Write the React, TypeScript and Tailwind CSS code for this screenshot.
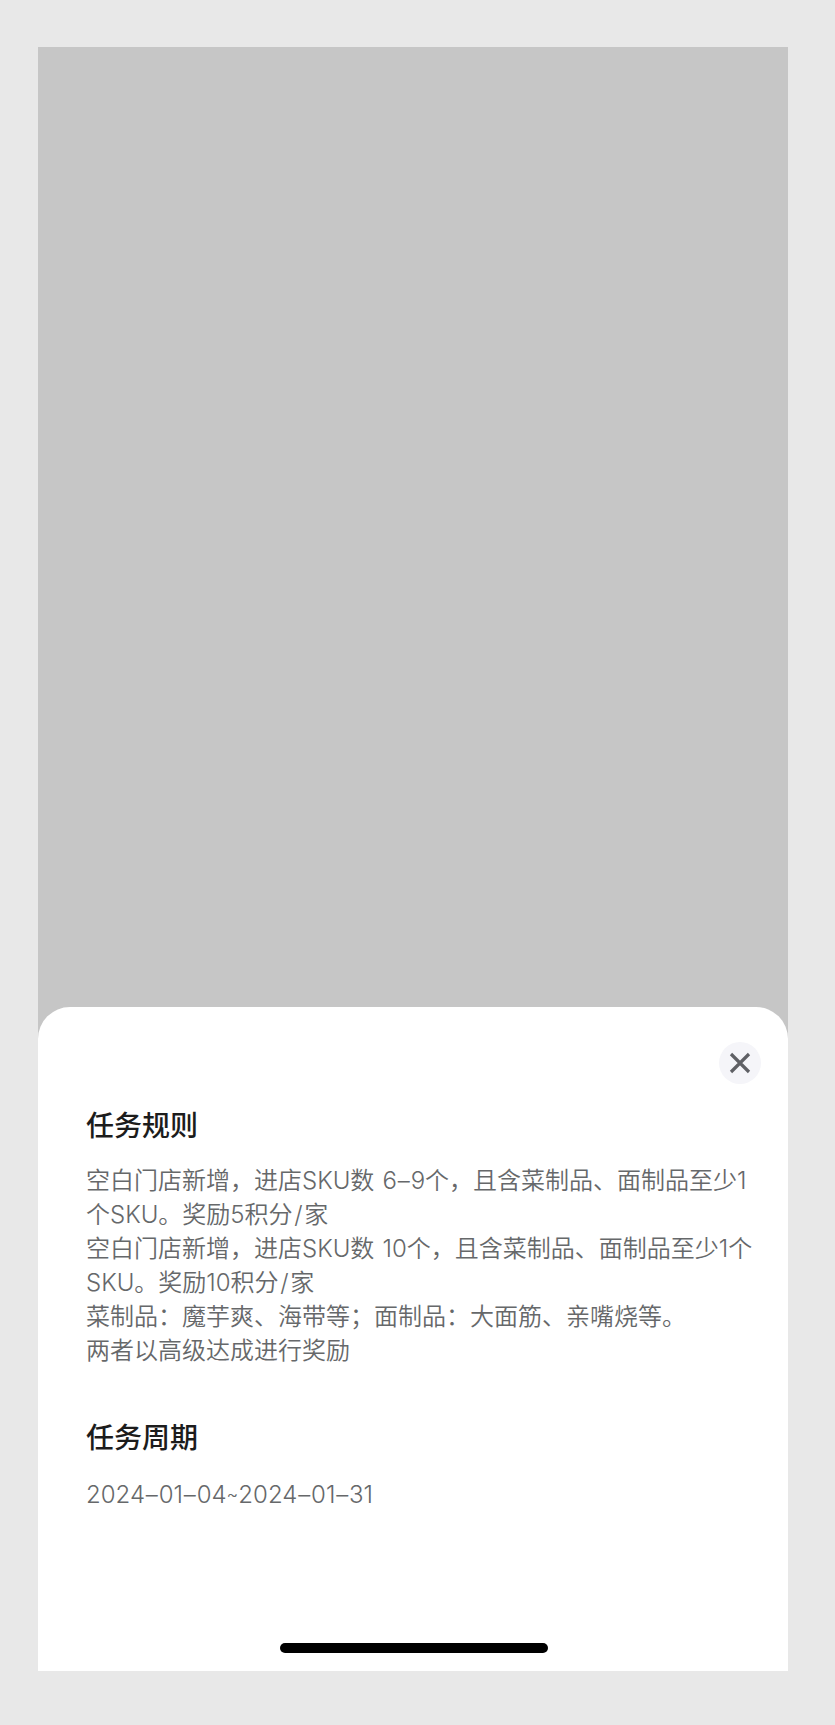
const rules = [
    "空白门店新增，进店SKU数 6–9个，且含菜制品、面制品至少1",
    "个SKU。奖励5积分/家",
    "空白门店新增，进店SKU数 10个，且含菜制品、面制品至少1个",
    "SKU。奖励10积分/家",
    "菜制品：魔芋爽、海带等；面制品：大面筋、亲嘴烧等。",
    "两者以高级达成进行奖励",
];

// extra room around the narrow latin punctuation
const spacing: Record<string, string> = {
    "–": "px-[0.85px]",
    "/": "px-[1.7px]",
    " ": "pr-[1.4px]",
    "~": "text-[18px] leading-none align-[2px]",
};

function Line({ text }: { text: string }) {
    return (
        <p className="whitespace-pre">
            {text.split(/([–/ ~])/).map((part, i) => (
                <span key={i} className={spacing[part]}>
                    {part}
                </span>
            ))}
        </p>
    );
}

export default function App() {
    return (
        <div className="h-[1725px] w-[835px] bg-[#e8e8e8] pt-[47px] pl-[38px] font-['Inter','Noto_Sans_CJK_SC',sans-serif]">
            <div className="flex h-[1624px] w-[750px] flex-col justify-end bg-[#c6c6c6]">
                <div className="flex h-[664px] flex-col rounded-t-[32px] bg-white">
                    <div className="flex justify-end pt-[35px] pr-[27px]">
                        <button
                            aria-label="关闭"
                            className="flex size-[42px] items-center justify-center rounded-full bg-[#f5f5f9]"
                        >
                            <svg width="22" height="22" viewBox="0 0 22 22" fill="none">
                                <path
                                    d="M2 2L20 20M20 2L2 20"
                                    stroke="#5f6065"
                                    strokeWidth="3.2"
                                />
                            </svg>
                        </button>
                    </div>
                    <div className="px-12 pt-[22px]">
                        <h2 className="text-[28px] leading-10 font-medium text-[#1c1c1c]">任务规则</h2>
                        <div className="mt-[18px] text-2xl leading-[34px] font-[350] text-[#66686a]">
                            {rules.map((text, i) => (
                                <Line key={i} text={text} />
                            ))}
                        </div>
                        <h2 className="mt-[50px] text-[28px] leading-10 font-medium text-[#1c1c1c]">任务周期</h2>
                        <div className="mt-[20px] text-2xl leading-[34px] font-light text-[#66686a]">
                            <Line text="2024–01–04~2024–01–31" />
                        </div>
                    </div>
                    <div className="mt-auto mb-[18px] ml-[242px] h-[10px] w-[268px] rounded-full bg-black"></div>
                </div>
            </div>
        </div>
    );
}
